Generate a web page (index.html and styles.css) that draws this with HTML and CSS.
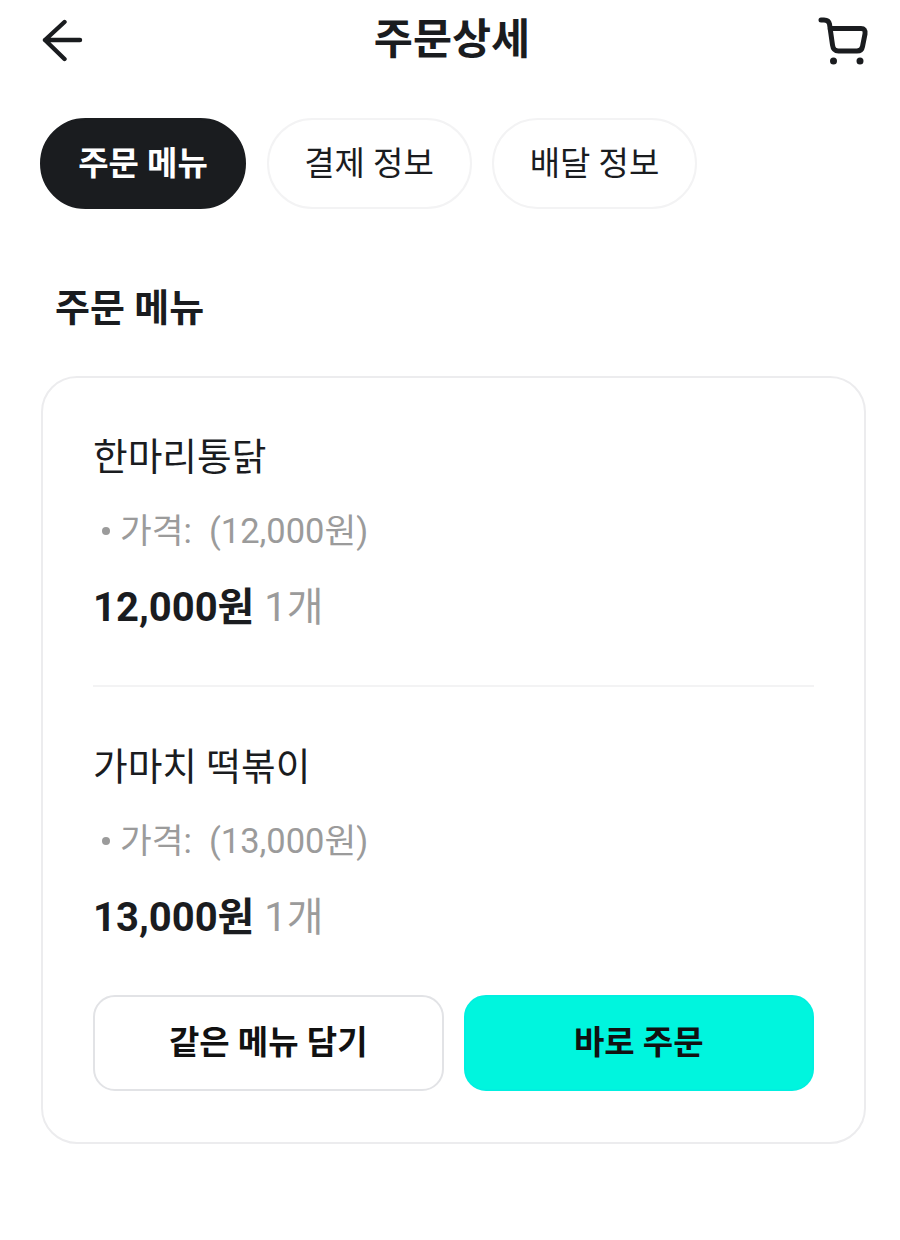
FILE: index.html
```html
<!DOCTYPE html>
<html lang="ko">
<head>
  <meta charset="UTF-8">
  <meta name="viewport" content="width=device-width, initial-scale=1.0">
  <title>주문상세</title>
  <link rel="stylesheet" href="styles.css">
</head>
<body>
  <header class="topbar">
    <button class="icon-btn" aria-label="back">
      <svg width="44" height="44" viewBox="0 0 44 44" fill="none" stroke="#1a1c1f" stroke-width="4.4" stroke-linecap="round" stroke-linejoin="round">
        <path d="M40 22H5M24.500 4L5 22L24.500 41"/>
      </svg>
    </button>
    <h1>주문상세</h1>
    <button class="icon-btn" aria-label="cart">
      <svg width="54" height="54" viewBox="0 0 54 54" fill="none" stroke="#1a1c1f" stroke-width="5" stroke-linecap="round" stroke-linejoin="round">
        <path d="M5 7H8C11 7 13 8.500 13.500 11L16.500 32C17 36 19 38 22.500 38H41C44 38 46 36.500 46.500 33.500L49 21C49.500 17 48 15.500 45 15.500H14"/>
        <circle cx="17.500" cy="48" r="2.500" fill="#1a1c1f" stroke-width="2"/>
        <circle cx="44" cy="48" r="2.500" fill="#1a1c1f" stroke-width="2"/>
      </svg>
    </button>
  </header>

  <nav class="tabs">
    <a class="tab active">주문 메뉴</a>
    <a class="tab">결제 정보</a>
    <a class="tab">배달 정보</a>
  </nav>

  <main>
    <h2 class="section-title">주문 메뉴</h2>
    <section class="card">
      <div class="item">
        <h3>한마리통닭</h3>
        <p class="option"><span class="dot"></span>가격:&nbsp; (12,000원)</p>
        <p class="price"><b>12,000원</b> <span>1개</span></p>
      </div>
      <hr>
      <div class="item">
        <h3>가마치 떡볶이</h3>
        <p class="option"><span class="dot"></span>가격:&nbsp; (13,000원)</p>
        <p class="price"><b>13,000원</b> <span>1개</span></p>
      </div>
      <div class="actions">
        <button class="btn">같은 메뉴 담기</button>
        <button class="btn primary">바로 주문</button>
      </div>
    </section>
  </main>
</body>
</html>
```

FILE: styles.css
```css
body {
  margin: 0;
  height: 1240px;
  overflow: hidden;
  background: #fff;
  color: #1a1c1f;
  font-family: Roboto, 'Noto Sans CJK KR', sans-serif;
}
.topbar {
  display: flex;
  align-items: center;
  justify-content: space-between;
  height: 80px;
  padding: 0 30px 0 40px;
}
.icon-btn {
  display: flex;
  padding: 0;
  border: none;
  background: none;
}
h1 {
  margin: 0 0 0 4px;
  font-size: 42.5px;
  font-weight: 700;
  line-height: 80px;
}
.tabs {
  display: flex;
  gap: 20.5px;
  margin-top: 38px;
  padding-left: 40px;
}
.tab {
  box-sizing: border-box;
  width: 205px;
  height: 91px;
  line-height: 87px;
  text-align: center;
  font-size: 33px;
  border: 2px solid #f3f3f4;
  border-radius: 46px;
}
.tab.active {
  width: 206px;
  background: #1a1c1f;
  border-color: #1a1c1f;
  color: #fff;
  font-weight: 700;
}
main {
  padding: 0 34px 0 41px;
}
.section-title {
  margin: 74px 0 43px 14px;
  font-size: 38px;
  font-weight: 700;
  line-height: 50px;
}
.card {
  padding: 52px 50px 51px;
  border: 2px solid #ececee;
  border-radius: 36px;
}
.item h3 {
  margin: 0;
  font-size: 37.7px;
  font-weight: 400;
  line-height: 54px;
}
.option {
  display: flex;
  align-items: center;
  margin: 23px 0 0;
  font-size: 34.500px;
  line-height: 48px;
  color: #9b9b9b;
}
.dot {
  width: 8px;
  height: 8px;
  margin: 0 10px 0 9px;
  border-radius: 50%;
  background: #9b9b9b;
}
.price {
  margin: 26px 0 0;
  font-size: 40px;
  line-height: 54px;
}
.price span {
  color: #9b9b9b;
}
hr {
  height: 2px;
  margin: 50px 0 53px;
  border: none;
  background: #f3f3f4;
}
.actions {
  display: flex;
  gap: 20px;
  margin-top: 50px;
}
.btn {
  flex: 1;
  height: 96px;
  padding: 0 0 6px;
  font: 700 33px Roboto, 'Noto Sans CJK KR', sans-serif;
  color: #111;
  background: #fff;
  border: 2px solid #e2e3e6;
  border-radius: 22px;
}
.btn.primary {
  background: #00f5de;
  border-color: #00f0e0;
}
```
